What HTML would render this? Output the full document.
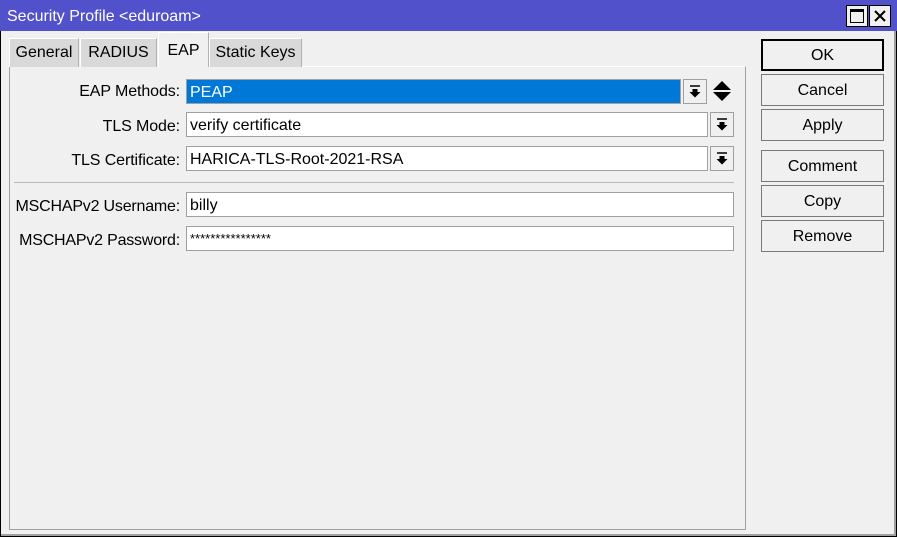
<!DOCTYPE html>
<html><head><style>
*{box-sizing:border-box;margin:0;padding:0}
body{width:897px;height:537px;overflow:hidden;background:#f0f0f0;font-family:"Liberation Sans",sans-serif;font-size:16px;color:#000;position:relative}
.a{position:absolute}
.win{left:0;top:0;width:897px;height:537px;border:1px solid #000;border-top:none}
.inner{left:1px;top:30px;width:895px;height:506px;border-right:2px solid #a0a0a0;border-bottom:2px solid #a0a0a0}
.title{left:0;top:0;width:897px;height:31px;background:#5151cc;color:#fff;padding:8px 0 0 7px;font-size:16px}
.tb{top:5px;width:22px;height:22px;background:#f0f0f0;border:1px solid #000}
.panel{left:9px;top:66px;width:737px;height:464px;border:1px solid #a0a0a0;border-top:1px solid #fff;background:#f0f0f0}
.tab{top:38px;height:29px;background:#d9d9d9;border:1px solid #fff;border-bottom:none;border-right:1px solid #b0b0b0;padding:5px 0 0 0;text-align:center}
.lbl{text-align:right;width:170px;left:10px;letter-spacing:-0.1px}
.fld{height:25px;background:#fff;border:1px solid #a0a0a0;padding:4px 3px;white-space:nowrap}
.dd{width:24px;height:25px;border:1px solid #a0a0a0;background:#f0f0f0}
.btn{left:761px;width:123px;height:32px;border:1px solid #7a7a7a;background:#f0f0f0;text-align:center;padding-top:7px}
</style></head><body>
<div class="a win"></div>
<div class="a inner"></div>
<div class="a title">Security Profile &lt;eduroam&gt;</div>
<div class="a tb" style="left:846px"><div class="a" style="left:3px;top:3px;width:14px;height:14px;border:1px solid #000;border-top:3px solid #000"></div></div>
<div class="a tb" style="left:869px"><svg width="20" height="20" class="a" style="left:0;top:0"><path d="M5 5L15 15M15 5L5 15" stroke="#000" stroke-width="2"/></svg></div>

<div class="a panel"></div>
<div class="a tab" style="left:9px;width:70px">General</div>
<div class="a tab" style="left:80px;width:77px">RADIUS</div>
<div class="a tab" style="left:158px;width:51px;top:32px;height:35px;background:#f0f0f0;padding-top:9px">EAP</div>
<div class="a tab" style="left:209px;width:93px">Static Keys</div>

<div class="a lbl" style="top:83px">EAP Methods:</div>
<div class="a fld" style="left:186px;top:79px;width:495px;background:#0078d7;color:#fff;border-color:#a0a0a0">PEAP</div>
<div class="a dd" style="left:683px;top:79px"><svg width="22" height="23"><path d="M6 6H16" stroke="#000" stroke-width="1.5"/><path d="M8.5 9H13.5V12H16.5L11 17.5L5.5 12H8.5Z" fill="#000"/></svg></div>
<svg class="a" style="left:712px;top:80px" width="20" height="22"><path d="M10 1L19 10H1Z M1 12H19L10 21Z" fill="#000"/></svg>

<div class="a lbl" style="top:118px">TLS Mode:</div>
<div class="a fld" style="left:186px;top:112px;width:522px">verify certificate</div>
<div class="a dd" style="left:710px;top:112px"><svg width="22" height="23"><path d="M6 6H16" stroke="#000" stroke-width="1.5"/><path d="M8.5 9H13.5V12H16.5L11 17.5L5.5 12H8.5Z" fill="#000"/></svg></div>

<div class="a lbl" style="top:152px">TLS Certificate:</div>
<div class="a fld" style="left:186px;top:146px;width:522px">HARICA-TLS-Root-2021-RSA</div>
<div class="a dd" style="left:710px;top:146px"><svg width="22" height="23"><path d="M6 6H16" stroke="#000" stroke-width="1.5"/><path d="M8.5 9H13.5V12H16.5L11 17.5L5.5 12H8.5Z" fill="#000"/></svg></div>

<div class="a" style="left:14px;top:182px;width:720px;height:1px;background:#b8b8b8"></div>

<div class="a lbl" style="top:198px;left:6px;width:174px;letter-spacing:-0.2px">MSCHAPv2 Username:</div>
<div class="a fld" style="left:186px;top:192px;width:548px">billy</div>
<div class="a lbl" style="top:232px;left:6px;width:174px;letter-spacing:-0.2px">MSCHAPv2 Password:</div>
<div class="a fld" style="left:186px;top:226px;width:548px;font-size:13px;padding-top:4px">****************</div>

<div class="a btn" style="top:39px;border:2px solid #000;padding-top:6px">OK</div>
<div class="a btn" style="top:74px">Cancel</div>
<div class="a btn" style="top:109px">Apply</div>
<div class="a btn" style="top:150px">Comment</div>
<div class="a btn" style="top:185px">Copy</div>
<div class="a btn" style="top:220px">Remove</div>
</body></html>
